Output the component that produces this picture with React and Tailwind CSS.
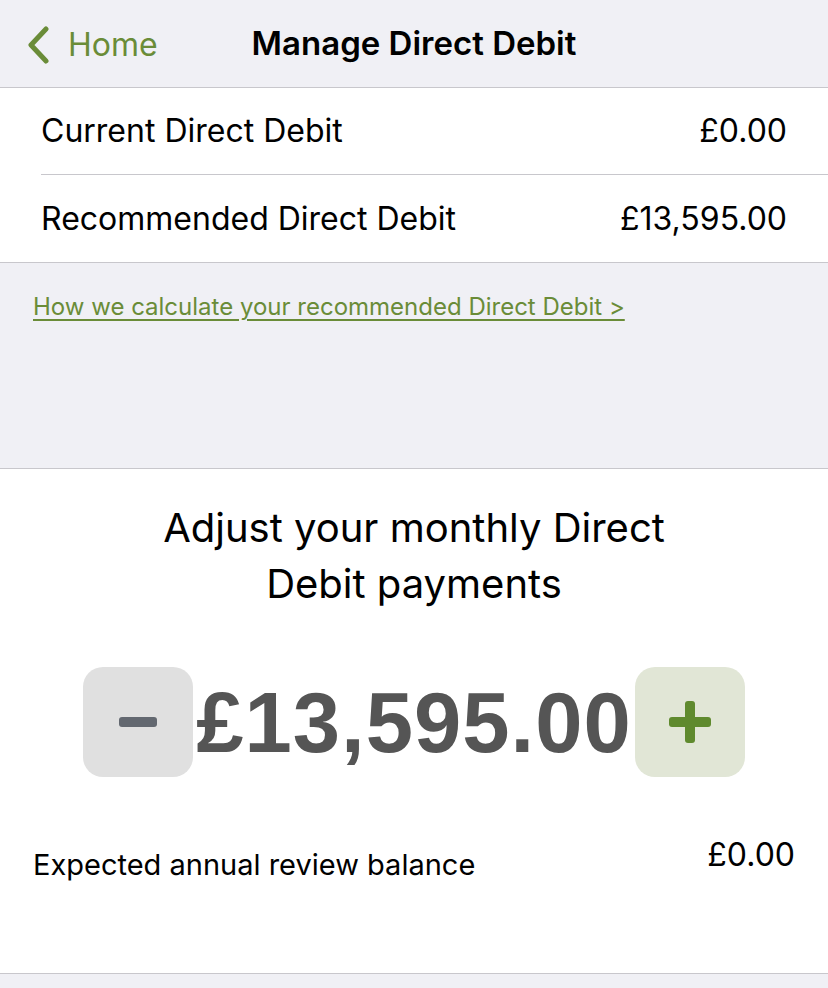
import React, { useState } from "react";

const sans = "font-['Inter','Roboto','Liberation_Sans',sans-serif]";

function Row({ label, value, divider }) {
  return (
    <div className="pl-[41px]">
      <div
        className={`flex h-[87px] items-center justify-between pr-[41px] text-[32px] text-black ${
          divider ? "border-b border-[#c8c7cc]" : ""
        }`}
      >
        <span>{label}</span>
        <span>{value}</span>
      </div>
    </div>
  );
}

export default function App() {
  const [amount, setAmount] = useState(13595);
  const fmt = (n) =>
    "£" + n.toLocaleString("en-GB", { minimumFractionDigits: 2, maximumFractionDigits: 2 });

  return (
    <div className={`h-[988px] w-[828px] overflow-hidden bg-[#f0f0f5] ${sans}`}>
      {/* Nav bar */}
      <div className="relative flex h-[88px] items-center justify-center border-b border-[#c8c7cc]">
        <button className="absolute left-[26px] top-[26px] flex items-center gap-[18px] text-[#6a8c38]">
          <svg width="24" height="38" viewBox="0 0 24 38" fill="none">
            <path d="M20 3 L5 19 L20 35" stroke="currentColor" strokeWidth="5" strokeLinecap="round" strokeLinejoin="round" />
          </svg>
          <span className="text-[32px] leading-none">Home</span>
        </button>
        <h1 className="text-[33px] font-semibold text-black">Manage Direct Debit</h1>
      </div>

      {/* Current / recommended */}
      <div className="border-b border-[#c8c7cc] bg-white">
        <Row label="Current Direct Debit" value="£0.00" divider />
        <Row label="Recommended Direct Debit" value="£13,595.00" />
      </div>

      {/* Info link */}
      <div className="h-[206px] border-b border-[#c8c7cc] px-[33px] pt-[26px]">
        <a href="#" className="text-[24px] text-[#6a8c38] underline underline-offset-[4px]">
          How we calculate your recommended Direct Debit &gt;
        </a>
      </div>

      {/* Adjust */}
      <div className="h-[505px] border-b border-[#c8c7cc] bg-white pt-[31px]">
        <h2 className="mx-auto w-[600px] text-center text-[40px] leading-[56px] text-black">
          Adjust your monthly Direct Debit payments
        </h2>

        <div className="mt-[55px] flex items-center justify-center gap-[3px]">
          <button
            onClick={() => setAmount((a) => Math.max(0, a - 1))}
            className="flex h-[110px] w-[110px] items-center justify-center rounded-[20px] bg-[#e0e0e0]"
          >
            <span className="block h-[10px] w-[38px] rounded-[3px] bg-[#636870]" />
          </button>
          <span className="font-['Liberation_Sans',Arial,sans-serif] text-[85px] font-bold leading-none tracking-[1px] text-[#555555]">
            {fmt(amount)}
          </span>
          <button
            onClick={() => setAmount((a) => a + 1)}
            className="flex h-[110px] w-[110px] items-center justify-center rounded-[20px] bg-[#e1e6d6]"
          >
            <svg width="44" height="44" viewBox="0 0 44 44">
              <rect x="17" y="1" width="10" height="42" rx="3" fill="#5f8a2e" />
              <rect x="1" y="17" width="42" height="10" rx="3" fill="#5f8a2e" />
            </svg>
          </button>
        </div>

        <div className="mt-[54px] flex items-start justify-between pl-[33px] pr-[33px] text-black">
          <span className="mt-[12px] text-[29px]">Expected annual review balance</span>
          <span className="text-[32px]">£0.00</span>
        </div>
      </div>
    </div>
  );
}
